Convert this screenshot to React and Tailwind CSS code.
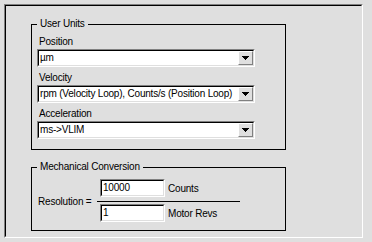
import React from "react";

function Arrow() {
  return (
    <svg width="7" height="4" viewBox="0 0 7 4" shapeRendering="crispEdges">
      <rect x="0" y="0" width="7" height="1" fill="#000" />
      <rect x="1" y="1" width="5" height="1" fill="#000" />
      <rect x="2" y="2" width="3" height="1" fill="#000" />
      <rect x="3" y="3" width="1" height="1" fill="#000" />
    </svg>
  );
}

function Sunken({ className = "", children, innerClass = "" }) {
  return (
    <div className={"border border-t-[#808080] border-l-[#808080] border-r-white border-b-white " + className}>
      <div className={"h-full border border-t-black border-l-black border-r-[#dfdfdf] border-b-[#dfdfdf] bg-white " + innerClass}>
        {children}
      </div>
    </div>
  );
}

function Dropdown({ value, className = "" }) {
  return (
    <Sunken className={"w-[218px] h-[18px] " + className} innerClass="flex items-stretch">
      <div className="flex-1 min-w-0 pl-[1px] leading-[14px] whitespace-nowrap overflow-hidden">{value}</div>
      <div className="w-[15px] shrink-0 bg-[#dfdfdf] border border-t-white border-l-white border-r-[#808080] border-b-[#808080] flex items-center justify-center">
        <Arrow />
      </div>
    </Sunken>
  );
}

function TextBox({ value }) {
  return (
    <Sunken className="w-[65px] h-[18px] shrink-0" innerClass="pl-[1px] leading-[14px]">
      {value}
    </Sunken>
  );
}

function Group({ title, className = "", children }) {
  return (
    <div className={"relative w-[255px] border border-black " + className}>
      <span className="absolute top-[-7px] left-[5px] px-[3px] h-[12px] leading-[12px] bg-[#dfdfdf] whitespace-nowrap">
        {title}
      </span>
      {children}
    </div>
  );
}

export default function App() {
  return (
    <div className="w-[372px] h-[242px] bg-[#dfdfdf] pt-[4px] pl-[4px] font-['Liberation_Sans',Arial,sans-serif] text-[10px] tracking-[-0.2px] text-black">
      <div className="w-[359px] h-[234px] border border-t-[#808080] border-l-[#808080] border-r-white border-b-white">
        <div className="h-full border border-t-black border-l-black border-r-[#dfdfdf] border-b-[#dfdfdf] pl-[25px] pt-[18px]">
          <Group title="User Units" className="px-[5px] pt-[11px] pb-[10px]">
            <div className="flex flex-col">
              <div className="h-[12px] leading-[12px] pl-[2px]">Position</div>
              <Dropdown className="mt-[1px]" value="µm" />
              <div className="mt-[5px] h-[12px] leading-[12px] pl-[2px]">Velocity</div>
              <Dropdown className="mt-[1px]" value="rpm (Velocity Loop), Counts/s (Position Loop)" />
              <div className="mt-[5px] h-[12px] leading-[12px] pl-[2px]">Acceleration</div>
              <Dropdown className="mt-[1px]" value="ms->VLIM" />
            </div>
          </Group>
          <Group title="Mechanical Conversion" className="mt-[17px] px-[5px] pt-[11px] pb-[8px]">
            <div className="flex items-center">
              <div className="w-[60px] pl-[1px] mt-[2px] whitespace-nowrap">Resolution =</div>
              <div className="w-[143px] flex flex-col">
                <div className="flex items-center pl-[3px]">
                  <TextBox value="10000" />
                  <span className="ml-[3px]">Counts</span>
                </div>
                <div className="mt-[4px] h-px bg-black" />
                <div className="mt-[2px] flex items-center pl-[3px]">
                  <TextBox value="1" />
                  <span className="ml-[3px]">Motor Revs</span>
                </div>
              </div>
            </div>
          </Group>
        </div>
      </div>
    </div>
  );
}
